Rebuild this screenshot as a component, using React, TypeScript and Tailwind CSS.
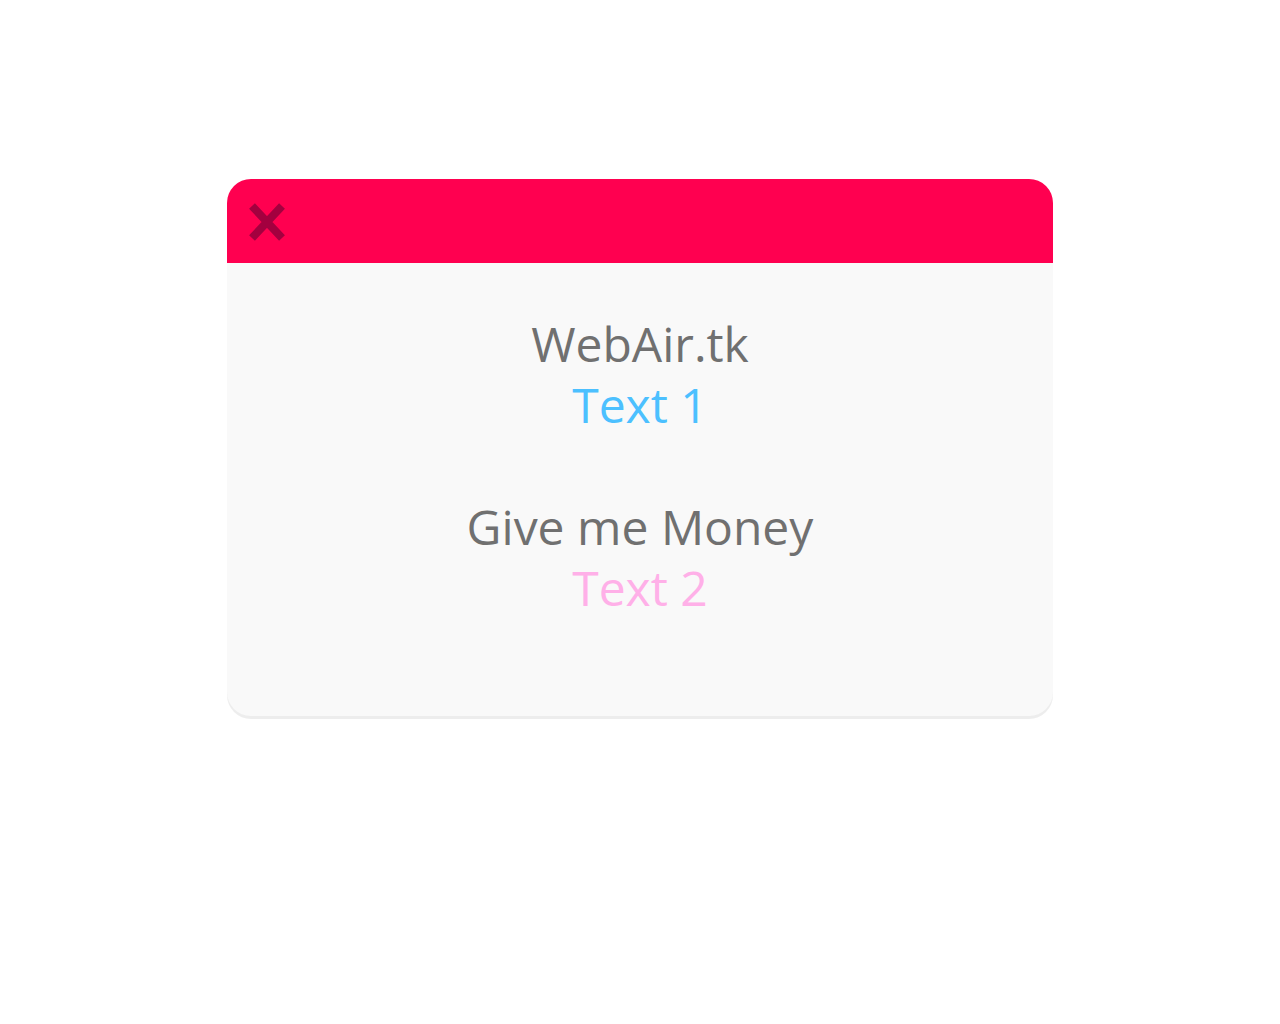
export default function App() {
  return (
    <main className="min-h-screen bg-white pt-[179px]">
      <div className="ml-[227px] w-[826px] overflow-hidden rounded-[24px] bg-[#f9f9f9] shadow-[0_3px_0_rgba(0,0,0,0.07)]">
        <div className="flex h-[84px] items-start bg-[#ff0050] pl-[21px] pt-[23px]">
          <svg width="38" height="40" viewBox="0 0 38 40" className="block">
            <path d="M4 4 L34 36 M34 4 L4 36" stroke="#a3003f" strokeWidth="8" />
          </svg>
        </div>
        <div
          className="flex flex-col items-center pb-[98px] pt-[50px] text-[48px] leading-[61px]"
          style={{ fontFamily: '"Open Sans", sans-serif' }}
        >
          <p className="text-[#707070]">WebAir.tk</p>
          <p className="text-[#4cc0ff]">Text 1</p>
          <p>&nbsp;</p>
          <p className="text-[#707070]">Give me Money</p>
          <p className="text-[#ffb0e8]">Text 2</p>
        </div>
      </div>
    </main>
  );
}
